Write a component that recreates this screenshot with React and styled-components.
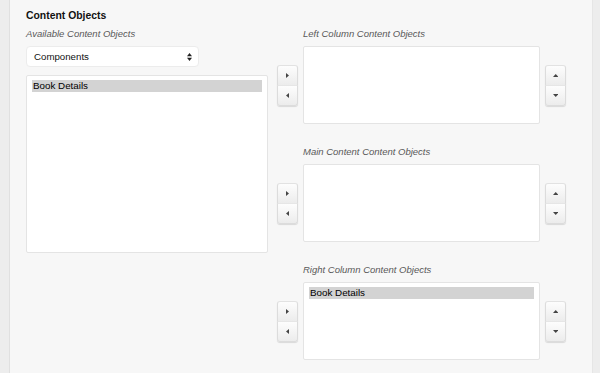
import React from "react";
import styled, { createGlobalStyle } from "styled-components";

const GlobalStyle = createGlobalStyle`
  html, body {
    margin: 0;
    padding: 0;
    background: #ededed;
    font-family: "Liberation Sans", Arial, Helvetica, sans-serif;
  }
`;

const Panel = styled.div`
  box-sizing: border-box;
  margin-left: 9px;
  width: 584px;
  height: 373px;
  overflow: hidden;
  padding: 9px 16px 0 16px;
  background: #f7f7f7;
  border-left: 1px solid #e0e0e0;
  border-right: 1px solid #e6e6e6;
`;

const Title = styled.h3`
  margin: 0;
  font-size: 10.4px;
  line-height: 14px;
  font-weight: bold;
  color: #111;
`;

const Columns = styled.div`
  display: flex;
  align-items: flex-start;
  gap: 9px;
  margin-top: 3px;
`;

const LeftColumn = styled.div`
  width: 242px;
  display: flex;
  flex-direction: column;
`;

const Label = styled.div`
  font-size: 9.5px;
  line-height: 16px;
  font-style: italic;
  color: #595959;
  margin-bottom: 4px;
`;

const GroupLabel = styled(Label)`
  grid-row: 1;
  grid-column: 2;
`;

const Select = styled.div`
  box-sizing: border-box;
  width: 173px;
  height: 21px;
  display: flex;
  align-items: center;
  justify-content: space-between;
  padding: 0 6px 0 7px;
  background: #fff;
  border: 1px solid #ececec;
  border-radius: 4px;
  font-size: 9.7px;
  color: #111;
`;

const ListBox = styled.div`
  box-sizing: border-box;
  height: ${(p) => p.$height}px;
  width: 100%;
  margin-top: ${(p) => p.$top || 0}px;
  padding: 4px 5px;
  background: #fff;
  border: 1px solid #e4e4e4;
  border-radius: 2px;
`;

const GroupList = styled(ListBox)`
  grid-row: 2;
  grid-column: 2;
`;

const Option = styled.div`
  height: 12px;
  line-height: 12px;
  padding-left: 1px;
  font-size: 9.8px;
  color: #000;
  background: ${(p) => (p.$selected ? "#d3d3d3" : "transparent")};
`;

const Groups = styled.div`
  display: flex;
  flex-direction: column;
  gap: 20px;
`;

const Group = styled.div`
  display: grid;
  grid-template-columns: 21px 237px 21px;
  grid-template-rows: auto 78px;
  column-gap: 5px;
`;

const ButtonStack = styled.div`
  grid-row: 2;
  grid-column: ${(p) => p.$col};
  align-self: center;
  display: flex;
  flex-direction: column;
  border-radius: 3px;
  box-shadow: 0 1px 1px rgba(0, 0, 0, 0.12);
`;

const Button = styled.button`
  box-sizing: border-box;
  width: 21px;
  height: 21px;
  padding: 0;
  display: flex;
  align-items: center;
  justify-content: center;
  background: linear-gradient(#fdfdfd, #ececec);
  border: 1px solid #dcdcdc;
  border-top-color: ${(p) => (p.$bottom ? "#e6e6e6" : "#e2e2e2")};
  border-radius: ${(p) => (p.$bottom ? "0 0 3px 3px" : "3px 3px 0 0")};
  margin-top: ${(p) => (p.$bottom ? "-1px" : "0")};
  cursor: pointer;
`;

const Arrow = ({ dir }) => {
  const pts = {
    right: "0,0 3,2.5 0,5",
    left: "3,0 0,2.5 3,5",
    up: "0,3 2.75,0 5.5,3",
    down: "0,0 2.75,3 5.5,0",
  }[dir];
  const horiz = dir === "left" || dir === "right";
  return (
    <svg width={horiz ? 3 : 5.5} height={horiz ? 5 : 3} viewBox={horiz ? "0 0 3 5" : "0 0 5.5 3"}>
      <polygon points={pts} fill="#444" />
    </svg>
  );
};

const SelectCaret = () => (
  <svg width="5" height="8" viewBox="0 0 5 8">
    <polygon points="0,3.3 2.5,0 5,3.3" fill="#222" />
    <polygon points="0,4.7 2.5,8 5,4.7" fill="#222" />
  </svg>
);

function TargetGroup({ label, items }) {
  return (
    <Group>
      <GroupLabel>{label}</GroupLabel>
      <ButtonStack $col="1">
        <Button>
          <Arrow dir="right" />
        </Button>
        <Button $bottom>
          <Arrow dir="left" />
        </Button>
      </ButtonStack>
      <GroupList $height={78}>
        {items.map((it) => (
          <Option key={it} $selected>
            {it}
          </Option>
        ))}
      </GroupList>
      <ButtonStack $col="3">
        <Button>
          <Arrow dir="up" />
        </Button>
        <Button $bottom>
          <Arrow dir="down" />
        </Button>
      </ButtonStack>
    </Group>
  );
}

export default function App() {
  return (
    <>
      <GlobalStyle />
      <Panel>
        <Title>Content Objects</Title>
        <Columns>
          <LeftColumn>
            <Label>Available Content Objects</Label>
            <Select>
              <span>Components</span>
              <SelectCaret />
            </Select>
            <ListBox $height={178} $top={8}>
              <Option $selected>Book Details</Option>
            </ListBox>
          </LeftColumn>
          <Groups>
            <TargetGroup label="Left Column Content Objects" items={[]} />
            <TargetGroup label="Main Content Content Objects" items={[]} />
            <TargetGroup label="Right Column Content Objects" items={["Book Details"]} />
          </Groups>
        </Columns>
      </Panel>
    </>
  );
}
